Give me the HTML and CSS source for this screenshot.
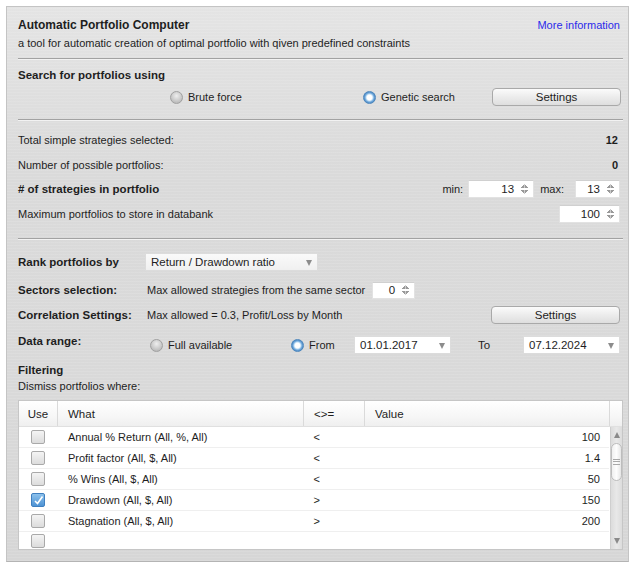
FILE: index.html
```html
<!DOCTYPE html>
<html lang="en">
<head>
    <meta charset="UTF-8">
    <title>Automatic Portfolio Computer</title>
    <link rel="stylesheet" href="styles.css">
</head>
<body>
    <div class="panel">
        <div class="row row-title">
            <span class="title">Automatic Portfolio Computer</span>
            <a class="more-link" href="#">More information</a>
        </div>
        <div class="row row-sub">a tool for automatic creation of optimal portfolio with qiven predefined constraints</div>

        <div class="sep sep-1"></div>

        <div class="row row-search"><span class="label">Search for portfolios using</span></div>
        <div class="row row-method">
            <label class="option opt-brute"><span class="radio"></span>Brute force</label>
            <label class="option opt-genetic"><span class="radio checked"></span>Genetic search</label>
            <button class="btn">Settings</button>
        </div>

        <div class="sep sep-2"></div>

        <div class="row row-total">
            <span>Total simple strategies selected:</span>
            <span class="num">12</span>
        </div>
        <div class="row row-possible">
            <span>Number of possible portfolios:</span>
            <span class="num">0</span>
        </div>
        <div class="row row-count">
            <span class="label">#&nbsp;of strategies in portfolio</span>
            <span class="push minlabel">min:</span>
            <span class="spinner spin-min"><span class="val">13</span><span class="arrows"></span></span>
            <span class="maxlabel">max:</span>
            <span class="spinner spin-max"><span class="val">13</span><span class="arrows"></span></span>
        </div>
        <div class="row row-store">
            <span>Maximum portfolios to store in databank</span>
            <span class="spinner spin-store push"><span class="val">100</span><span class="arrows"></span></span>
        </div>

        <div class="sep sep-3"></div>

        <div class="row row-rank">
            <span class="label key">Rank portfolios by</span>
            <span class="select rank-select">Return / Drawdown ratio<span class="caret"></span></span>
        </div>
        <div class="row row-sectors">
            <span class="label key">Sectors selection:</span>
            <span class="desc">Max allowed strategies from the same sector</span>
            <span class="spinner spin-sector"><span class="val">0</span><span class="arrows"></span></span>
        </div>
        <div class="row row-corr">
            <span class="label key">Correlation Settings:</span>
            <span class="desc">Max allowed = 0.3, Profit/Loss by Month</span>
            <button class="btn push">Settings</button>
        </div>
        <div class="row row-range">
            <span class="label key range-label">Data range:</span>
            <label class="option opt-full"><span class="radio"></span>Full available</label>
            <label class="option opt-from"><span class="radio checked"></span>From</label>
            <span class="select date-select">01.01.2017<span class="caret"></span></span>
            <span class="to-label">To</span>
            <span class="select date-select">07.12.2024<span class="caret"></span></span>
        </div>

        <div class="row row-filter"><span class="label">Filtering</span></div>
        <div class="row row-dismiss">Dismiss portfolios where:</div>

        <div class="grid">
            <div class="grid-head">
                <div class="cell c-use center">Use</div>
                <div class="cell c-what">What</div>
                <div class="cell c-op">&lt;&gt;=</div>
                <div class="cell c-val">Value</div>
                <div class="cell c-pad"></div>
            </div>
            <div class="grid-body">
                <div class="grid-rows">
                    <div class="grid-row">
                        <div class="cell c-use center"><span class="check"></span></div>
                        <div class="cell c-what">Annual % Return (All, %, All)</div>
                        <div class="cell c-op">&lt;</div>
                        <div class="cell c-val right">100</div>
                    </div>
                    <div class="grid-row">
                        <div class="cell c-use center"><span class="check"></span></div>
                        <div class="cell c-what">Profit factor (All, $, All)</div>
                        <div class="cell c-op">&lt;</div>
                        <div class="cell c-val right">1.4</div>
                    </div>
                    <div class="grid-row">
                        <div class="cell c-use center"><span class="check"></span></div>
                        <div class="cell c-what">% Wins (All, $, All)</div>
                        <div class="cell c-op">&lt;</div>
                        <div class="cell c-val right">50</div>
                    </div>
                    <div class="grid-row">
                        <div class="cell c-use center"><span class="check checked">
                            <svg width="11" height="11" viewBox="0 0 11 11"><path d="M2 6 L4.5 8.5 L9.5 1.5" fill="none" stroke="#fff" stroke-width="1.6"/></svg>
                        </span></div>
                        <div class="cell c-what">Drawdown (All, $, All)</div>
                        <div class="cell c-op">&gt;</div>
                        <div class="cell c-val right">150</div>
                    </div>
                    <div class="grid-row">
                        <div class="cell c-use center"><span class="check"></span></div>
                        <div class="cell c-what">Stagnation (All, $, All)</div>
                        <div class="cell c-op">&gt;</div>
                        <div class="cell c-val right">200</div>
                    </div>
                    <div class="grid-row last">
                        <div class="cell c-use center"><span class="check"></span></div>
                        <div class="cell c-what"></div>
                        <div class="cell c-op"></div>
                        <div class="cell c-val"></div>
                    </div>
                </div>
                <div class="vscroll">
                    <span class="sarrow up"></span>
                    <span class="thumb"><span class="grip"></span></span>
                    <span class="sarrow down"></span>
                </div>
            </div>
        </div>
    </div>
</body>
</html>
```

FILE: styles.css
```css
* {
    margin: 0;
    padding: 0;
    box-sizing: border-box;
}

body {
    font-family: "Liberation Sans", Arial, sans-serif;
    font-size: 11px;
    color: #1e1e1e;
    background: #fff;
}

.panel {
    margin: 6px;
    width: 623px;
    height: 556px;
    padding: 10px 7px 0 11px;
    border: 1px solid #c4c4c4;
    border-bottom-color: #b4b4b4;
    background:
        repeating-linear-gradient(0deg, rgba(255, 255, 255, 0.10) 0 1px, transparent 1px 3px),
        linear-gradient(#e4e4e4, #dadada 30%, #d9d9d9 70%, #d6d6d6);
    display: flex;
    flex-direction: column;
}

.row {
    display: flex;
    align-items: center;
    flex-shrink: 0;
}

.push {
    margin-left: auto;
}

.label {
    font-weight: bold;
    font-size: 11.5px;
    color: #1e1e1e;
}

.title {
    font-weight: bold;
    font-size: 12px;
}

.more-link {
    margin-left: auto;
    margin-right: 1px;
    color: #2b2bea;
    text-decoration: none;
}

.row-title { height: 16px; }
.row-sub { height: 16px; margin-top: 2px; }

.sep {
    flex-shrink: 0;
    height: 2px;
    width: 605px;
    border-top: 1px solid #a2a2a2;
    border-bottom: 1px solid #f2f2f2;
}

.sep-1 { margin-top: 7px; }
.sep-2 { margin-top: 12px; }
.sep-3 { margin-top: 14px; }

.row-search { height: 16px; margin-top: 7px; }
.row-method { height: 20px; margin-top: 4px; }

.option {
    display: flex;
    align-items: center;
    gap: 5px;
}

.opt-brute { margin-left: 152px; width: 193px; }
.opt-genetic { width: 129px; }

.radio {
    width: 13px;
    height: 13px;
    border-radius: 50%;
    border: 1px solid #a0a0a0;
    background: radial-gradient(circle at 50% 35%, #eeeeee, #bdbdbd 75%);
}

.radio.checked {
    border-color: #4d87bd;
    background: radial-gradient(circle, #ffffff 0 2.5px, #cfe6f7 3.2px, #6fa8dc 4.5px, #3b78b4 6.5px);
}

.btn {
    width: 129px;
    height: 18px;
    font: inherit;
    font-size: 11.5px;
    color: #1e1e1e;
    border: 1px solid #a9a9a9;
    border-radius: 4px;
    background: linear-gradient(#fbfbfb, #ececec 50%, #dedede);
    cursor: pointer;
}

.row-total { height: 18px; margin-top: 10px; justify-content: space-between; }
.row-possible { height: 18px; margin-top: 7px; justify-content: space-between; }
.row-count { height: 20px; margin-top: 5px; }
.row-store { height: 20px; margin-top: 5px; }

.num {
    font-weight: bold;
    margin-right: 3px;
}

.spinner {
    display: flex;
    align-items: center;
    justify-content: flex-end;
    height: 18px;
    background: #fff;
    border: 1px solid #e2e2e2;
    border-top-color: #d0d0d0;
}

.spinner .val {
    padding-right: 7px;
    font-size: 11.5px;
}

.spinner .arrows {
    width: 7px;
    height: 10px;
    margin-right: 5px;
    background:
        linear-gradient(to bottom right, transparent 50%, #999 50%) 0 0 / 3.5px 4px no-repeat,
        linear-gradient(to bottom left, transparent 50%, #999 50%) 3.5px 0 / 3.5px 4px no-repeat,
        linear-gradient(to top right, transparent 50%, #999 50%) 0 6px / 3.5px 4px no-repeat,
        linear-gradient(to top left, transparent 50%, #999 50%) 3.5px 6px / 3.5px 4px no-repeat;
}

.minlabel { margin-right: 5px; }
.spin-min { width: 66px; }
.maxlabel { margin: 0 11px 0 6px; }
.spin-max { width: 45px; margin-right: 1px; }
.spin-store { width: 61px; margin-right: 1px; }
.spin-sector { width: 43px; height: 17px; margin-left: 7px; }

.key {
    width: 127px;
    flex-shrink: 0;
}

.row-rank { height: 20px; margin-top: 12px; }
.row-sectors { height: 20px; margin-top: 8px; }
.row-corr { height: 20px; margin-top: 5px; }
.row-range { height: 20px; margin-top: 10px; }

.desc {
    margin-left: 2px;
}

.btn.push {
    margin-right: 1px;
}

.select {
    position: relative;
    display: flex;
    align-items: center;
    height: 18px;
    padding-left: 5px;
    font-size: 11.5px;
    border: 1px solid #dcdcdc;
    background: #fff;
}

.rank-select {
    width: 173px;
    background: linear-gradient(#fafafa, #f0f0f0);
}

.caret {
    position: absolute;
    right: 5px;
    top: 6px;
    width: 0;
    height: 0;
    border-left: 3.5px solid transparent;
    border-right: 3.5px solid transparent;
    border-top: 6px solid #8c8c8c;
}

.range-label {
    align-self: flex-start;
}

.opt-full { margin-left: 5px; width: 141px; }
.opt-from { width: 63px; }
.date-select { width: 97px; }
.to-label { width: 72px; padding-left: 27px; font-size: 11.5px; }

.row-filter { height: 16px; margin-top: 7px; }
.row-dismiss { height: 15px; }

/* filter grid */

.grid {
    margin-top: 7px;
    width: 605px;
    height: 150px;
    flex-shrink: 0;
    background: #fff;
    border: 1px solid #c6c6c6;
    display: flex;
    flex-direction: column;
}

.grid-head {
    display: flex;
    height: 26px;
    flex-shrink: 0;
    background: linear-gradient(#ffffff, #f7f7f7 60%, #efefef);
    border-bottom: 1px solid #e0e0e0;
}

.grid-head .cell {
    border-right: 1px solid #dadada;
    font-size: 11.5px;
}

.cell {
    display: flex;
    align-items: center;
    padding-left: 10px;
    white-space: nowrap;
}

.cell.center {
    justify-content: center;
    padding-left: 0;
}

.cell.right {
    justify-content: flex-end;
    padding-right: 9px;
}

.c-use { width: 39px; }
.c-what { width: 246px; }
.c-op { width: 61px; }
.c-val { width: 245px; }
.grid-head .c-pad { flex: 1; border-right: none; }

.grid-body {
    flex: 1;
    display: flex;
    min-height: 0;
}

.grid-rows {
    width: 591px;
    overflow: hidden;
}

.grid-row {
    display: flex;
    height: 21px;
    border-bottom: 1px solid #efefef;
}

.grid-row.last {
    border-bottom: none;
    height: 18px;
}

.check {
    display: flex;
    align-items: center;
    justify-content: center;
    width: 14px;
    height: 14px;
    border: 1px solid #a9a9a9;
    border-radius: 2px;
    background: linear-gradient(#f4f4f4, #dcdcdc);
}

.check.checked {
    border-color: #3f7fbf;
    background: linear-gradient(#8cc1ec, #4e93d4);
}

.vscroll {
    margin-left: 1px;
    width: 12px;
    display: flex;
    flex-direction: column;
    align-items: center;
    background: linear-gradient(to right, #dcdcdc, #e8e8e8, #dcdcdc);
    border-left: 1px solid #cfcfcf;
}

.sarrow {
    width: 0;
    height: 0;
    border-left: 3.5px solid transparent;
    border-right: 3.5px solid transparent;
}

.sarrow.up {
    margin-top: 5px;
    border-bottom: 6px solid #8a8a8a;
}

.sarrow.down {
    margin-top: auto;
    margin-bottom: 5px;
    border-top: 6px solid #8a8a8a;
}

.thumb {
    margin-top: 5px;
    width: 11px;
    height: 38px;
    border: 1px solid #bdbdbd;
    border-radius: 6px;
    background: linear-gradient(to right, #f0f0f0, #fdfdfd, #e6e6e6);
    display: flex;
    align-items: center;
    justify-content: center;
}

.grip {
    width: 7px;
    height: 6px;
    background: repeating-linear-gradient(#a8a8a8 0 1px, transparent 1px 2.5px);
}
```
